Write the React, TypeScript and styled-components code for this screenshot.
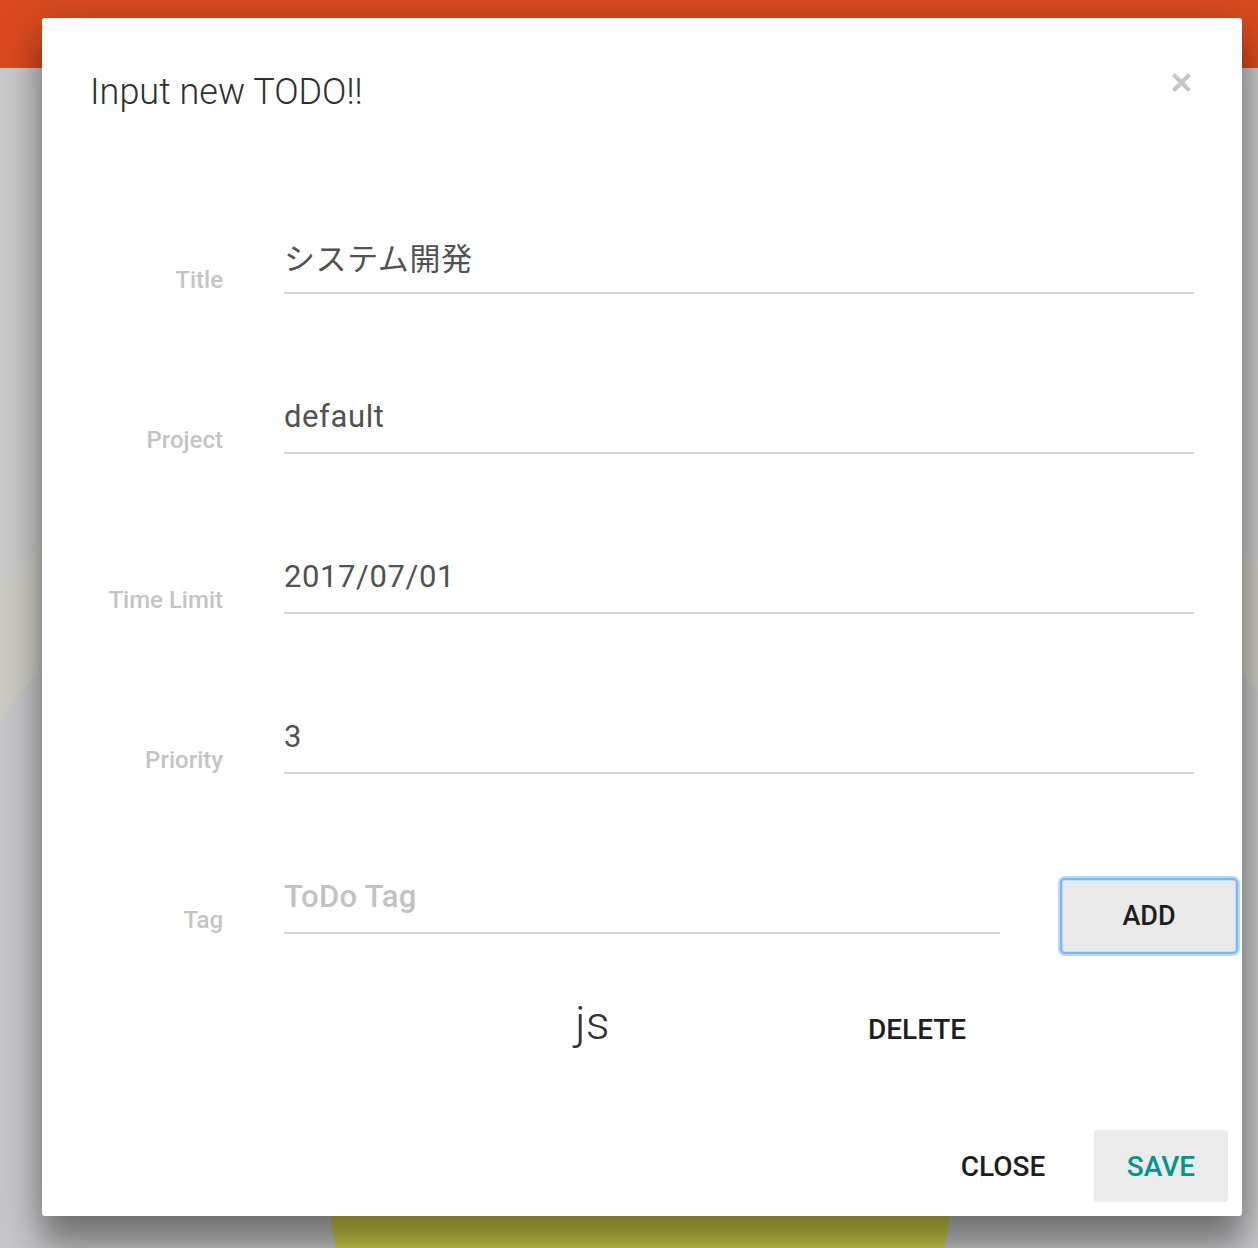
import React from "react";
import styled, { createGlobalStyle } from "styled-components";

const Global = createGlobalStyle`
  html, body { margin: 0; padding: 0; }
  body {
    font-family: Roboto, "Noto Sans CJK JP", "Liberation Sans", sans-serif;
    background: #cacaca;
  }
  * { box-sizing: border-box; }
`;

const Page = styled.div`
  position: relative;
  width: 1258px;
  height: 1248px;
  overflow: hidden;
  background: #c9c9c9;
  display: flex;
  flex-direction: column;
`;

const AppBar = styled.header`
  height: 68px;
  flex: none;
  background: #d84a1e;
`;

const Chart = styled.svg`
  display: block;
  flex: 1;
  width: 100%;
`;

const Dialog = styled.div`
  position: absolute;
  left: 42px;
  top: 18px;
  width: 1200px;
  height: 1198px;
  background: #fff;
  border-radius: 3px;
  box-shadow: 0 12px 40px rgba(0, 0, 0, 0.32), 0 34px 30px rgba(0, 0, 0, 0.24);
  display: flex;
  flex-direction: column;
`;

const Header = styled.div`
  display: flex;
  justify-content: space-between;
  align-items: flex-start;
  padding: 50px 48px 18px 48px;
  height: 116px;
`;

const Title = styled.h1`
  margin: 0;
  font-family: Roboto, sans-serif;
  font-weight: 300;
  font-size: 36px;
  line-height: 48px;
  color: #2f2f2f;
`;

const CloseIcon = styled.button`
  border: 0;
  background: none;
  padding: 0;
  margin: 2px 1px 0 0;
  width: 24px;
  height: 24px;
  display: flex;
  align-items: center;
  justify-content: center;
  cursor: pointer;
`;

const Form = styled.div`
  display: flex;
  flex-direction: column;
`;

const Row = styled.div`
  height: 160px;
  display: flex;
  align-items: flex-end;
  padding-right: 48px;
`;

const Label = styled.label`
  width: 181px;
  flex: none;
  text-align: right;
  font-family: Roboto, sans-serif;
  font-weight: 500;
  font-size: 24px;
  line-height: 26px;
  color: #c4c4c4;
  margin-right: 61px;
  margin-bottom: 1px;
`;

const Field = styled.input<{ $width?: number }>`
  ${(p) => (p.$width ? `width: ${p.$width}px; flex: none;` : `flex: 1; min-width: 0;`)}
  border: 0;
  border-bottom: 2px solid #d6d6d6;
  outline: none;
  background: transparent;
  padding: 0 0 18px 0;
  height: 56px;
  font-family: Roboto, "Noto Sans CJK JP", sans-serif;
  font-weight: 400;
  font-size: 31px;
  line-height: 36px;
  letter-spacing: 0.6px;
  color: #525252;
  &::placeholder {
    color: #c2c2c2;
    font-weight: 500;
    letter-spacing: 0.3px;
  }
`;

const AddButton = styled.button`
  margin-left: 60px;
  margin-bottom: -20px;
  width: 178px;
  height: 76px;
  flex: none;
  border-radius: 5px;
  border: 2px solid #7ab5f5;
  box-shadow: 0 0 0 2px #b9d9fb, inset 0 0 0 1px #c5dcf3;
  background: #e9e9e9;
  font-family: Roboto, sans-serif;
  font-weight: 500;
  font-size: 27px;
  color: #1e1e1e;
  cursor: pointer;
`;

const TagList = styled.div`
  display: flex;
  align-items: baseline;
  padding-left: 533px;
  margin-top: 63px;
`;

const TagName = styled.span`
  font-family: Roboto, sans-serif;
  font-weight: 300;
  font-size: 47px;
  line-height: 52px;
  color: #333;
  width: 293px;
`;

const FlatButton = styled.button<{ $tone?: "dark" | "accent"; $filled?: boolean }>`
  border: 0;
  border-radius: 3px;
  background: ${(p) => (p.$filled ? "#ebebeb" : "transparent")};
  color: ${(p) => (p.$tone === "accent" ? "#009688" : "#1e1e1e")};
  font-family: Roboto, sans-serif;
  font-weight: 500;
  font-size: 28px;
  line-height: 36px;
  padding: 0;
  cursor: pointer;
`;

const Footer = styled.div`
  margin-top: auto;
  display: flex;
  justify-content: flex-end;
  align-items: center;
  gap: 24px;
  padding: 0 14px 14px 0;
`;

const FooterButton = styled(FlatButton)`
  width: 134px;
  height: 72px;
  padding-top: 1px;
`;

const fields = [
  { label: "Title", value: "システム開発" },
  { label: "Project", value: "default" },
  { label: "Time Limit", value: "2017/07/01" },
  { label: "Priority", value: "3" },
];

export default function App() {
  return (
    <>
      <Global />
      <Page>
        <AppBar />
        <Chart viewBox="0 0 1258 1180" preserveAspectRatio="none">
          <circle cx="640" cy="1106" r="870" fill="#cbcac2" />
          <circle cx="640" cy="1106" r="784" fill="#c6c6c8" />
          <circle cx="640" cy="1106" r="313" fill="#cbce48" />
        </Chart>
        <Dialog>
          <Header>
            <Title>Input new TODO!!</Title>
            <CloseIcon aria-label="close">
              <svg width="21" height="21" viewBox="0 0 21 21">
                <path d="M2.5 2.5 L18.5 18.5 M18.5 2.5 L2.5 18.5" stroke="#c6c6c6" strokeWidth="4.2" />
              </svg>
            </CloseIcon>
          </Header>
          <Form>
            {fields.map((f) => (
              <Row key={f.label}>
                <Label>{f.label}</Label>
                <Field defaultValue={f.value} readOnly />
              </Row>
            ))}
            <Row>
              <Label>Tag</Label>
              <Field $width={716} placeholder="ToDo Tag" />
              <AddButton>ADD</AddButton>
            </Row>
          </Form>
          <TagList>
            <TagName>js</TagName>
            <FlatButton>DELETE</FlatButton>
          </TagList>
          <Footer>
            <FooterButton>CLOSE</FooterButton>
            <FooterButton $filled $tone="accent">SAVE</FooterButton>
          </Footer>
        </Dialog>
      </Page>
    </>
  );
}
